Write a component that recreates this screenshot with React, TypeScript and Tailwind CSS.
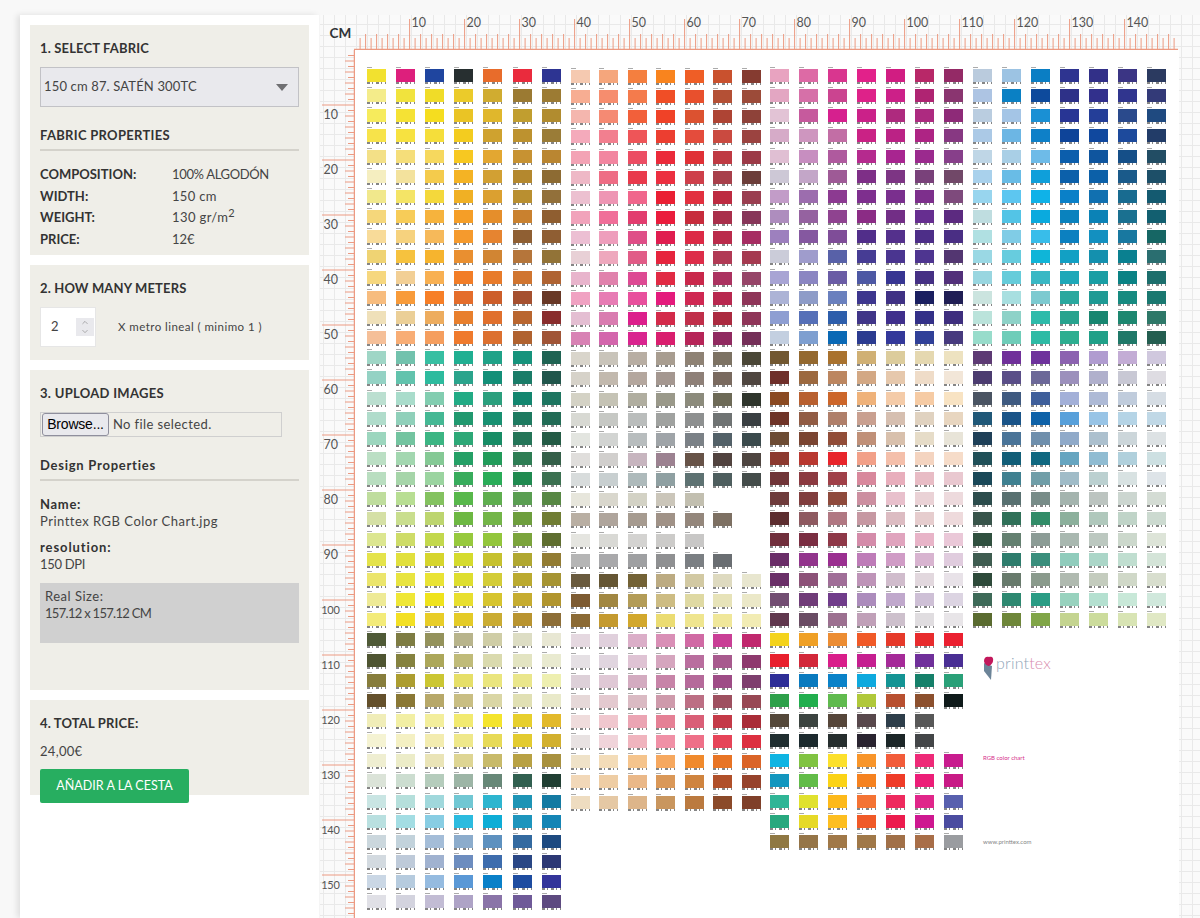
import { ChevronUp, ChevronDown } from "lucide-react";

const B1 = `F2E12F DD1F7C 1F459F 272F30 E86C2B EA2B3D 2D3492
F4EC8A F1E33D F0DC28 EBCB2A D0AC30 9B7A32 9C7B33
F6EB5C F5E234 F5DD1F EAC425 E0B72C C19E2F B18C2F
F7E34A F7E240 F5DE3A F3CC1F CFA22F BD922F 9A7C37
F3E087 F5DE7A F6D85E F7C821 E3A731 C79232 BA8631
F5EEC0 F3E29D F4CB4C F4B324 D2A033 B4882E 8D6B33
F1E88C F4E466 F4D83B F0B024 DBA030 B98F30 92703A
F5D77B F7CC58 F6B33D F59E27 E58E2B C9812F 8F5E30
F8DB99 F6D27E F6B95A F59A2D E68430 8F5F33 8F5E33
EFD373 F6C23E F6B42E E98F30 D18533 B5753A 927337
F6D77E F2CF95 F8B052 F27D27 E87B2A D07530 AF6332
F7BC7E F89B3A F77F27 E46D2B CD5E2A A5502F 683826
EFE0B9 EBCF97 EDAC5E E87F2D E0702D B9662F 892D2D
F5BF98 F8AD75 F59E5E EF7A2D DC702F B0622F A05436
9FD6C6 72C2AD 37BFA2 20AF92 1FA288 16937C 1F6353
94D2C4 62C3AD 2DBB9E 2AA48C 138F78 1A7C68 21564C
BBDFD0 A9DCCB 82CDB0 22AB85 2B9F7D 13866F 1E7560
B0DCCB 90D0BA 45B894 21996F 189071 1E7A60 226B55
9CD6BE 73C4A0 3CB583 2DA877 178C65 257558 245B45
BBDFC4 A3D7B0 85C995 25A066 229B5A 2E7D54 345F48
B9DEC0 A6D5A9 9BD4A0 38AC5C 2AAC58 208A50 3B7050
BFDD9D B8DE93 84C260 58B84B 5FAE4F 5A9E52 578744
D5E0A5 C9DE8E BDD56F 6DB843 73B548 6D9E3D 6F7C33
DCE690 CEDC68 C3D84D 97C93D 93C63C 7BA43C 5F6E30
E4E34B E1E03D D6D52D D5DB2D C6C12F B0A731 927C33
EBE56C E8E440 E9E335 DEDE2F D3CC38 BBAA30 A69433
EEEA96 EFE736 EFE31D E8DF2F D6C42F C6AC30 B1952E
F3EB79 F3E024 E8CD28 E4CB27 CAAC33 B99430 8D6E37
4F5A37 7E7C43 94925C B8B48C CFCDA6 DDDDC4 E8E7D3
4F5532 85823F ACA75A C0BB79 DADAAE E3E4C2 E9EAD0
877D3C AC9D30 CBC633 E6DF68 EAE57E EAE68C EEEFB0
64502C 8A7835 B7A869 C9BE83 DAD6A5 E1E0B4 E9E9C9
F0EDB8 F2EFA4 F3EE9C F2EA70 F4E42D E7CF2D E2B92B
F5F3D3 F4F0C3 F3ECB0 EFE88A E7DA57 E3CB30 D2B02F
EFEED1 ECECC8 EAE4B7 DED593 C8BA6A B8A144 A8913F
DBE3D8 CCDDD0 B5CCBC 9DB5A6 688878 326050 213F33
C9E5E3 B5DFDB A0D8DC 71C7D3 2EB5CF 1E94B5 147AA2
B9E0E0 A3DDE3 88CDE3 2CBBDF 0EADD6 1E95BD 1585B5
CBD7DD C2D2DB A4BDD8 8CACCC 5E91BF 346AA0 1E4A80
D3DAE0 BECAD9 A0B2D0 6D8DBF 3E6DAD 2A4785 2C3874
CAD7E5 B6CBDE 95BBE0 5A98D6 0A80C8 1E4CA0 33359A
E0E0E6 D3D3DE C2BCD4 AEA3C6 8A74A8 6F5A98 5D4A80`;

const B2 = `F5C9B0 F5A67C F47F3F F9841E EF5E26 C9512E 853B30
F7AD92 F68D6E F47B4C F04E26 E8502D B45035 9C4B39
F4B6AE F58A73 F2603A F04227 DC5230 AE4434 8E4239
F4AABB F27F8F EE5558 EC3E30 E44C3C CA4A40 9B4340
F3A3B5 F286A0 EC4D63 EB2A3A E03136 BF3A43 9C3A47
EEB8C6 EE6D85 E93A4C EC2F40 CE3F4A A8404B 6C3E3A
ECC0D0 EE96B4 F0668C EA1F33 E2303F BD2B41 9A3E50
F1A3BB F06F99 E23C6E EA1C3C C72C3C A92F4B 873659
ECBFD3 EE9EBC DF4E87 E01D4F DC2A46 BA2B4B A62D62
E8D0D6 EEA8BD E15C87 E6243D DD2D49 B13A55 A53A50
E8B4CC E082AC DD4A93 E12A44 C9284B AB3260 964568
F0A2C2 E77CB4 E8509D E41B7C CF2852 B8284F 8E3558
E4BED2 D97CB0 DC1F8C D32A4A C02F4A AB2A40 8E3558
D882B4 D366AC D9258F D91E6E B62558 902A60 742F58
D9D5CB C9C4BA B8AEA3 A89D90 8E8274 7C7263 4A4737
D6D2C9 C2B9AE B4A79E A49790 8E8078 796A5F 4F4640
D4D2C5 C5C3B5 B0AEA0 9A998A 8C8B7C 6D6A57 2F352C
D8D9D3 C6C8C4 BABDBC A0A2A0 8E9090 6F7373 3A3F42
E3E5E0 D2D4D2 B8BDBE 9FA4A8 7B8186 536168 3B4A4C
E0DEDC D1CFCD C7B5BF 9C8291 675348 51433F 4E4540
D8DCDC C8CFD0 AEBABB 8FA0A2 5E7272 4E5E5E 444C4A
E7E6DC D9D7CD D3D2C5 CBC6BA C2BFB0 - -
B9AFA3 AFA59C A69B90 A09287 94877C 7D7063 -
E5E5E0 D9D9D5 D4D3D1 CCCBC9 C8C7C6 - -
B5B5B5 A9A9AB 9FA0A2 8F9092 7B7F83 6A6E72 -
695A3E 655634 736236 BCAB82 D2C9A3 DEDAC0 E8E6CF
7D5B32 A18742 B39C57 CDBC83 DFD9A3 E7E3B9 EBE8C8
8B6A35 C49A30 D2A82D EBDC72 EFE58F F0E79A F2ECB4
E5D8E0 E0D0DC DBAEC8 D98FB6 D06AA4 C93F96 C0286E
E5E0E4 E0D5DF DFC3D4 D5A5BE B96E9E A85A8E 8E3A6E
DDD0D8 DFC8D5 D3ABC0 C784A8 B56A9A 9E4C86 7E3F6E
E6D8D8 E3C9CF DABAC3 CE9AAB BC6F84 9E5060 974854
EFDCDC F0C7CE EBA4B3 E58095 D95F77 C43A48 A92D38
E8E2E2 F0D4DA F0B4BE F090A6 EE7088 E64458 DC3040
EFE2C8 F3DCB8 F5C48C F6A85F F08A2D E87425 DA6428
F2D8B8 EECDA4 EAB888 DA9858 CF843F B0502A 96432C
EEDCC0 E5C8A4 DDB58A C9965E BB7A3F 8B4A2A 7F402A`;

const B3 = `E8A3C0 DD6AA5 D9368F E2218A D11D82 B82868 942A66
E3A6C2 D670A8 CB4490 DE2289 CC2088 AF2472 8A3570
E2C3D5 C65A9D D6208E CB2189 AE2A7E AD2A80 8E2A78
D6ABC8 CE96BF C26EA5 CA2285 BB2285 AE2484 873882
E0BFD3 C78EC0 AF5A9E B52A8E A82590 9B2A8E 873F8A
CDC8D6 C3A6C8 9E5A96 7E2F87 7D3584 79417A 714868
C29CC8 9C6DAE 8C3A91 7E2F8E 7A2F8E 7D2F8C 7E4A7C
AE8DBE 9562A0 8F4390 8B2C85 722E86 662E90 5C2A80
9D80BE 8558A0 7F4D98 512E8A 54308C 4D2E88 4A2E84
CBCCD9 9F9CCC 5861A8 463C94 4A3590 4E3590 533671
A8A4D4 8B86C2 6A5CA5 4D58A4 373592 453084 52307A
ACB3D6 8E9CC8 6A80BE 3D368E 3F3184 1A1F60 201E54
8E9ED2 5670B8 2D5EAB 403588 3F2F8C 333088 3E2E7E
C3CFE0 7E9FD0 0A69B5 2B3B90 33389A 304098 473A7E
725831 94692F A9722E D0B074 DCCC9C E5D8B0 EDE2C0
6E2F2A 9C693F BC8660 D3A884 E6C8AC EFDCC8 F2E6D8
8A4A22 B86030 CC662A EFB27A F4CBA8 F6CBA4 F8E3C3
6E3428 915C44 AF7F6A C9A090 D6BFB0 E0D2C0 E8D6C0
6C4C34 7A4532 914D38 C09078 D8C0AC E6DCC8 E8E4D8
8C3A30 B83830 E8252B F2A088 F4BFAA F4D4C0 F6DCC9
703538 8B3A40 A04048 D8889C E8AEBC E8BCC5 E9C8D0
6E3C3C 803E3E 8E4A3C CC8FA0 E8C0CC EAD2D6 EDDADD
5C2E30 8E5A60 B07882 C698A2 DCBCC2 E6CDCE EEDADC
702F3C 7A2E42 8E3848 D48CAA E0A4BE E8B4C8 EAC8D8
6A2E68 92358C 9A2F90 BE7CB8 D09CC6 D8B4D0 E0CCDE
6A3068 8C5278 A06E98 BE94B8 D0BCCC E2D8DE E8E2E8
724E72 703C78 703C8A AC8CBC C0A8CC CEC0D6 DCD4E2
60384E 6A4C64 9C7090 C0A0B8 CDC0CC E0DDE0 E8E5E8
F4D31C EFA026 EC8D33 F05A28 E63A2A E82C2E EB2030
E8202E D2283A D91E8A C51F90 A52A98 70309A 4A2F94
2E2E96 0A7ABE 0A82C8 0EA9DE 149494 16806A 2AA078
2EA04A 22AE4E 60BA4E B0C83A B85030 8C502E 0F1A1A
54483A 3C4440 56463A 58484C 2E3E4A 585858 -
202E30 1C2A2E 262E2E 2A2430 1C2628 444648 -
0EB4E2 80C342 FCE02C F8952A F25C3A EE2A78 C81C8E
1296BE 62BC48 FBD316 F58220 EF3C28 EC1E78 C81A86
30B596 E0E12E FDB91A F47334 EE2A5E E0268A 5860AE
28A87E E6D927 FDBE20 F05A28 EC1C4E CE1890 4B4CA0
8F7843 957548 A07848 A07848 A17048 A86E48 9A9CA0`;

const B4 = `BACBDD 9CC3E3 0A7EC4 2E3490 323088 3B3584 2B3A60
ADC4E3 0A80C4 0D4A9C 2E3188 32308C 30358E 333A78
BACDE0 A4C5E6 1A90D4 283594 243E98 2A4A8C 1F4A80
ABC9E6 6CB6E4 0E80C8 0E4499 10489E 1D4A9C 223C68
BFD6E6 A9CFE6 6EBBE8 0C5EAC 0F559E 154F88 224D64
A9D1EC 69BCE6 0F9FDA 0C60AA 0C60A8 1A5A8A 1D4F68
98D5EE 5DC6F0 0FB2E8 0A80C8 1170B0 186B90 145A70
BFDDE0 53C4E6 0AAADE 0A82BE 0B82B6 1A7090 125F70
B0E0E2 80CCE6 38BDEA 0C80C0 1390C0 1878A0 166664
9AD8E4 67CCDE 0FB5D8 12A0C4 1490AE 0A8090 2A6E70
99D6E0 66CCDA 3AB8C4 1EA8B8 1A9EA4 0A8284 1C6E6C
CBE4DF A8DFE0 7DCAD0 2AA89E 1F9A94 168A80 1A7870
BBE3DB 8ED2C8 2EBBAA 28A38E 188670 1D8770 2E7868
98DCCB 6FCDB9 2EBBA5 2DAE90 20A088 1F7868 245E50
5D3A74 70309A 6E329C 8C62B0 B09CD0 C3ACD5 D0C8DE
4C3C70 5A4E88 6C6898 9C90BC B0B0CC C8C8D4 DEDCE2
4A5462 3F5A80 3F5F9A A3B0D8 AEBAD6 C0CCDC D6DDE4
205878 1A5488 0F62A8 58A0DA 98C4E6 B5D4E6 C0D8E6
1F4058 4A7498 6F8FAC 90AAC9 ACC0CE CCD6DA DDE2E4
205058 125E78 106880 66A5C0 90BCD2 B0D0DC CDE0E2
1A4858 3F8090 709EA8 A0BCC8 BBD0D0 D8E2E2 DEE4E8
2C4C4C 587070 788C88 A4B4AE BCC4C0 CCD6D0 D4DCD4
38544A 307058 328C68 8CB09C B0C8BC C0D4C8 CCDAD0
30503F 648070 8C9C96 A9B8B0 BCC8C0 CCD8CC DDE4D8
3F5C50 2E7C6C 3A8E7C 90CCBC ABD6C8 C0DED0 D4E4D8
2E4A3A 687A6C 8A9A8C B0BAB0 C4CCBE D0D8C8 D8DECE
3E6A58 2E8870 2A9C84 98D2BE B4E0D0 C8E8D8 D0E8DC
5A6B30 6E863A 80A548 C4D490 CCDC9C D8E4B4 E0E8C4`;

const parse = (s: string) => s.split("\n").flatMap((r) => r.trim().split(/\s+/));

function Swatch({ c }: { c: string }) {
  if (c === "-") return <div className="h-[20.17px]" />;
  return (
    <div className="h-[20.17px] w-[19px]">
      <div className="h-px w-[5px] bg-[#444] opacity-45" />
      <div className="mt-px h-[13px] w-[19px]" style={{ backgroundColor: "#" + c }} />
      <div className="h-[2px] w-[19px] opacity-55 bg-[repeating-linear-gradient(90deg,#222_0_3px,transparent_3px_5px,#222_5px_6px,transparent_6px_9px)]" />
    </div>
  );
}

function Block({ data, className }: { data: string; className: string }) {
  return (
    <div className={"grid grid-cols-7 content-start " + className}>
      {parse(data).map((c, i) => (
        <Swatch key={i} c={c} />
      ))}
    </div>
  );
}

function TopRuler() {
  const ticks = [];
  for (let i = 1; i <= 149; i++) {
    const x = 34.6 + i * 5.5;
    const major = i % 10 === 0;
    const h = major ? 31 : i % 2 === 0 ? 16 : 12;
    ticks.push(<line key={i} x1={x} x2={x} y1={35 - h} y2={35} stroke="#ec9a82" strokeWidth="1" />);
  }
  const labels = [];
  for (let n = 10; n <= 140; n += 10) {
    labels.push(
      <text key={n} x={34.6 + n * 5.5 + 2} y={11.5} fontSize="12.5" fill="#555" fontFamily="Lato, sans-serif">
        {n}
      </text>,
    );
  }
  return (
    <svg width="880" height="35" className="block shrink-0">
      <text x="9.5" y="23" fontSize="13.5" fontWeight="700" fill="#2f3336" fontFamily="Lato, sans-serif">
        CM
      </text>
      <line x1="34" x2="858" y1="34.5" y2="34.5" stroke="#ec9a82" strokeWidth="1.5" />
      {ticks}
      {labels}
    </svg>
  );
}

function LeftRuler() {
  const ticks = [];
  for (let i = 1; i <= 158; i++) {
    const y = i * 5.5;
    const major = i % 10 === 0;
    const w = major ? 33 : i % 2 === 0 ? 10 : 7;
    ticks.push(<line key={i} x1={35 - w} x2={35} y1={y} y2={y} stroke="#ec9a82" strokeWidth="1" />);
  }
  const labels = [];
  for (let n = 10; n <= 150; n += 10) {
    labels.push(
      <text
        key={n}
        x={n >= 100 ? 19.5 : 18}
        y={n * 5.5 + 13.5}
        fontSize={n >= 100 ? 11 : 12.5}
        letterSpacing={n >= 100 ? -0.3 : 0}
        textAnchor="end"
        fill="#555"
        fontFamily="Lato, sans-serif"
      >
        {n}
      </text>,
    );
  }
  return (
    <svg width="35" height="868" className="block shrink-0">
      <line x1="34.5" x2="34.5" y1="0" y2="868" stroke="#ec9a82" strokeWidth="1.5" />
      {ticks}
      {labels}
    </svg>
  );
}

function Heading({ children, className = "" }: { children: React.ReactNode; className?: string }) {
  return <div className={"text-[13px] font-bold leading-[16px] text-[#333] " + className}>{children}</div>;
}

function PropRow({ label, children, className }: { label: string; children: React.ReactNode; className: string }) {
  return (
    <div className={"flex text-[13px] leading-[16px] " + className}>
      <span className="w-[132px] font-bold text-[#333]">{label}</span>
      <span className="text-[#444]">{children}</span>
    </div>
  );
}

export default function App() {
  return (
    <div className="flex h-[918px] overflow-hidden bg-[#f8f8f8] pl-[20px] pt-[15px] font-['Lato',sans-serif] text-[#444]">
      <aside className="z-10 w-[299px] shrink-0 bg-white px-[10px] pt-[10px] shadow-[-3px_0_6px_rgba(0,0,0,0.1)]">
        <section className="h-[230px] bg-[#efeee8] px-[10px] pt-[15px]">
          <Heading className="tracking-[0.15px]">1. SELECT FABRIC</Heading>
          <div className="mt-[11px] flex h-[40px] w-[259px] items-center justify-between border border-[#c2c2c6] bg-[#e9e9ed] pl-[3px] pr-[10px] text-[13px] tracking-[0.15px] text-[#444]">
            <span>150 cm 87. SATÉN 300TC</span>
            <svg width="12" height="7" viewBox="0 0 12 7">
              <path d="M0 0H12L6 7Z" fill="#6f6f72" />
            </svg>
          </div>
          <Heading className="mt-[20px] tracking-[0.3px]">FABRIC PROPERTIES</Heading>
          <div className="mt-[6px] h-[2px] w-[259px] bg-[#d4d2cb]" />
          <PropRow label="COMPOSITION:" className="mt-[15px]">
            <span className="tracking-[-0.35px]">100% ALGODÓN</span>
          </PropRow>
          <PropRow label="WIDTH:" className="mt-[6px]">
            <span className="tracking-[0.3px]">150 cm</span>
          </PropRow>
          <PropRow label="WEIGHT:" className="mt-[5px]">
            <span className="tracking-[0.4px]">130 gr/m</span>
            <sup className="text-[11px]">2</sup>
          </PropRow>
          <PropRow label="PRICE:" className="mt-[6px]">
            12€
          </PropRow>
        </section>

        <section className="mt-[10px] h-[95px] bg-[#efeee8] px-[10px] pt-[15px]">
          <Heading className="tracking-[0.15px]">2. HOW MANY METERS</Heading>
          <div className="mt-[11px] flex items-center">
            <div className="flex h-[40px] w-[56px] items-center justify-between border border-[#e6e6e6] bg-white pl-[10px] pr-[1px] text-[13px]">
              <span>2</span>
              <span className="flex h-[18px] w-[18px] flex-col items-center justify-center bg-[#e9e9ed] text-[#777]">
                <ChevronUp size={10} strokeWidth={1.5} />
                <ChevronDown size={10} strokeWidth={1.5} />
              </span>
            </div>
            <span className="ml-[22px] text-[11.5px] tracking-[0.45px] text-[#444]">X metro lineal ( minimo 1 )</span>
          </div>
        </section>

        <section className="mt-[10px] h-[320px] bg-[#efeee8] px-[10px] pt-[15px]">
          <Heading className="tracking-[0.3px]">3. UPLOAD IMAGES</Heading>
          <div className="mt-[11px] flex h-[25px] w-[242px] items-center border border-[#cfcfcf] pl-px text-[13px] tracking-[0.4px] text-[#444]">
            <button className="h-[23px] w-[67px] rounded-[3px] border border-[#8f8f9d] bg-[#e9e9ed] font-['Liberation_Sans',sans-serif] text-[14px] tracking-[-0.2px] text-black">
              Browse...
            </button>
            <span className="ml-[4px]">No file selected.</span>
          </div>
          <Heading className="mt-[20px] tracking-[0.75px]">Design Properties</Heading>
          <div className="mt-[6px] h-[2px] w-[259px] bg-[#d4d2cb]" />
          <div className="mt-[15px] text-[13px] font-bold leading-[17px] tracking-[0.7px] text-[#333]">Name:</div>
          <div className="text-[13px] leading-[17px] tracking-[0.5px]">Printtex RGB Color Chart.jpg</div>
          <div className="mt-[9px] text-[13px] font-bold leading-[17px] tracking-[0.9px] text-[#333]">resolution:</div>
          <div className="text-[13px] leading-[17px] tracking-[-0.3px]">150 DPI</div>
          <div className="mt-[10px] h-[60px] w-[259px] bg-[#d0d0d0] px-[5px] pt-[5px] text-[13px] leading-[17px] tracking-[0.5px]">
            Real Size:
            <br />
            <span className="tracking-[-0.7px]">157.12 x 157.12 CM</span>
          </div>
        </section>

        <section className="mt-[10px] h-[95px] bg-[#efeee8] px-[10px] pt-[15px]">
          <Heading className="tracking-[0.15px]">4. TOTAL PRICE:</Heading>
          <div className="mt-[12px] text-[13px] leading-[16px] tracking-[0.3px]">24,00€</div>
          <button className="mt-[10px] h-[34px] w-[149px] rounded-[2px] bg-[#27ae60] text-[12.5px] text-white">
            AÑADIR A LA CESTA
          </button>
        </section>
      </aside>

      <main className="ml-px flex min-w-0 flex-1 flex-col bg-[#fafafa] bg-[linear-gradient(#e9e9e9_1px,transparent_1px),linear-gradient(90deg,#e9e9e9_1px,transparent_1px)] bg-[size:11px_11px] bg-[position:3px_9px]">
        <TopRuler />
        <div className="flex">
          <LeftRuler />
          <div className="flex h-[868px] w-[824px] shrink-0 bg-white pl-[11.5px] pt-[17px]">
            <Block data={B1} className="w-[204.5px]" />
            <Block data={B2} className="mt-[1px] w-[199px]" />
            <Block data={B3} className="w-[203px]" />
            <div className="w-[203px]">
              <Block data={B4} className="w-[203px]" />
              <div className="ml-[10px] mt-[25px] flex items-start">
                <svg width="12" height="24" viewBox="0 0 12 24" className="shrink-0">
                  <path d="M1 7 L9 10 L8 24 L1 15 Z" fill="#6c8498" />
                  <path d="M1 5 C1 1 4 0 6 1 C8 0 11 1 10 5 C10 7 7 10 6 10 C5 10 1 8 1 5 Z" fill="#c2185b" />
                </svg>
                <span className="-mt-[3px] ml-px text-[16px] font-light leading-[20px] tracking-[0.2px]">
                  <span className="text-[#8fa5b8]">print</span>
                  <span className="text-[#d98cae]">tex</span>
                </span>
              </div>
              <div className="ml-[10px] mt-[74px] text-[6px] leading-[8px] text-[#d6308a]">RGB color chart</div>
              <div className="ml-[10px] mt-[76px] text-[6px] leading-[8px] text-[#888]">www.printtex.com</div>
            </div>
          </div>
        </div>
      </main>
    </div>
  );
}
